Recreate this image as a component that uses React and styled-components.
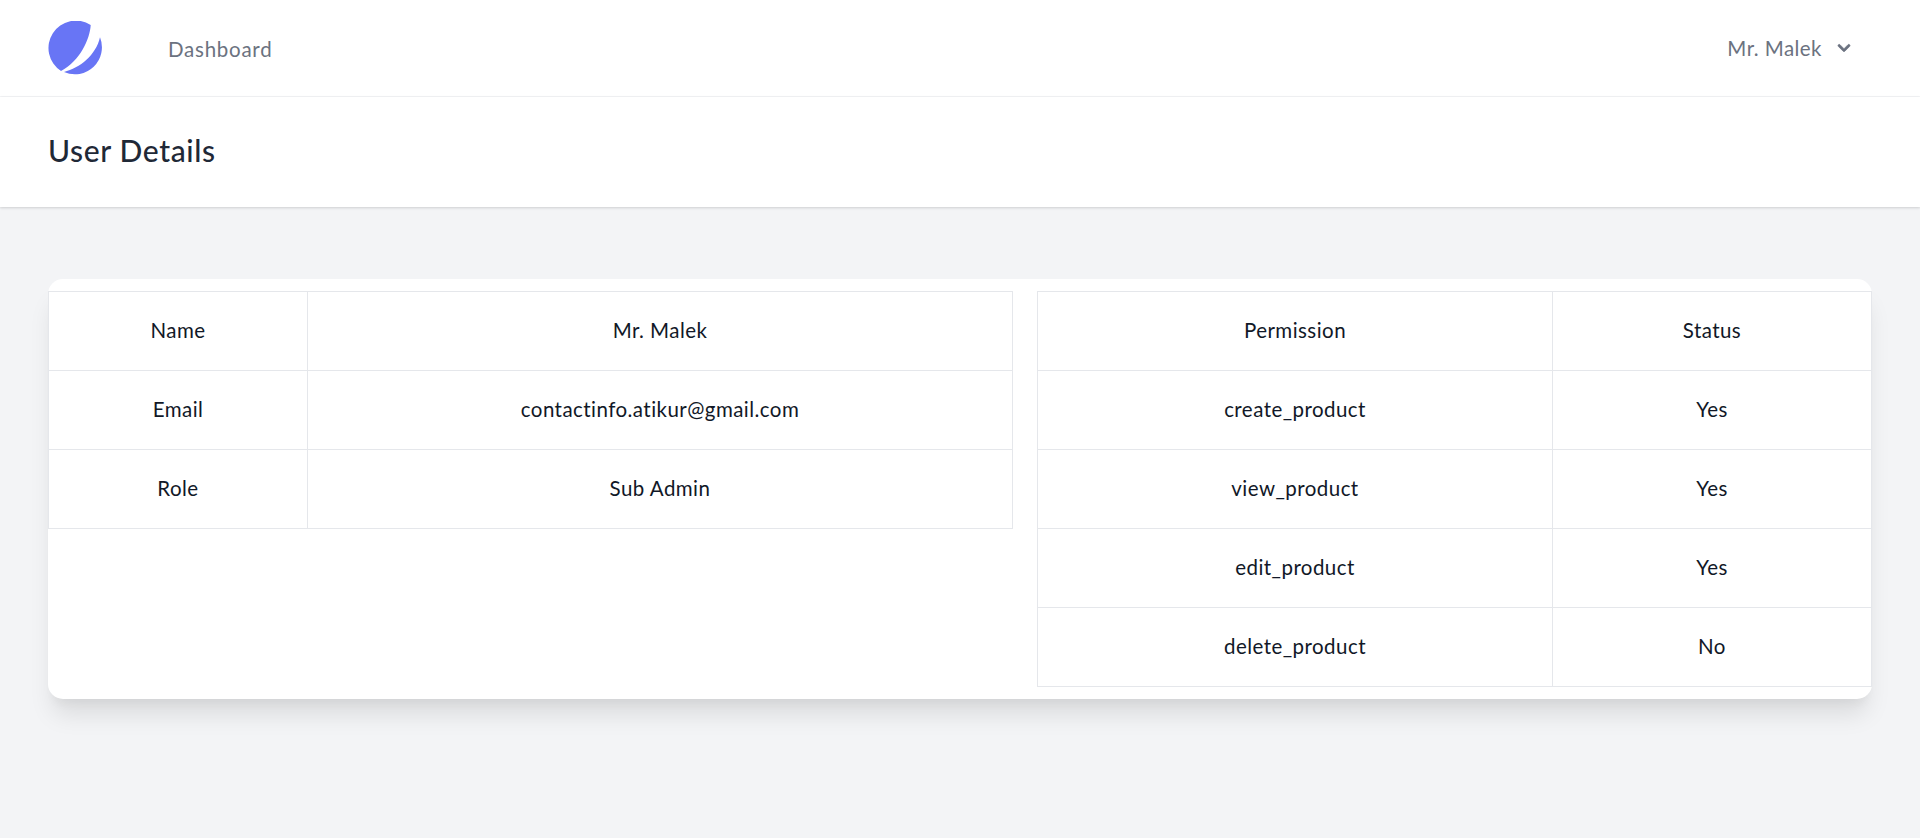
import React from 'react';
import styled, { createGlobalStyle } from 'styled-components';
import { HiChevronDown } from 'react-icons/hi';

const GlobalStyle = createGlobalStyle`
  html, body {
    margin: 0;
    padding: 0;
    background: #f3f4f6;
  }
  body {
    font-family: 'Lato', 'Noto Sans', sans-serif;
    letter-spacing: 0.45px;
  }
`;

const Page = styled.div`
  min-height: 838px;
  background: #f3f4f6;
`;

const Nav = styled.nav`
  height: 96px;
  box-sizing: content-box;
  background: #ffffff;
  border-bottom: 1px solid #f3f4f6;
  display: flex;
  align-items: center;
  justify-content: space-between;
  padding: 0 48px;
`;

const NavLeft = styled.div`
  display: flex;
  align-items: center;
  gap: 66px;
`;

const Logo = styled.svg`
  width: 54px;
  height: 54px;
  display: block;
`;

const NavLink = styled.a`
  margin-top: 2px;
  font-size: 20.5px;
  letter-spacing: 0.75px;
  color: #6b7280;
  text-decoration: none;
`;

const UserMenu = styled.button`
  display: flex;
  align-items: center;
  gap: 10px;
  margin: 0 16px 0 0;
  padding: 0;
  border: none;
  background: none;
  font: inherit;
  letter-spacing: inherit;
  font-size: 20.5px;
  color: #6b7280;
`;

const Chevron = styled(HiChevronDown)`
  stroke: currentColor;
  stroke-width: 0.5;
`;

const Header = styled.header`
  background: #ffffff;
  height: 110px;
  padding: 0 48px 4px;
  box-sizing: border-box;
  display: flex;
  align-items: center;
  box-shadow: 0 1px 3px rgba(0, 0, 0, 0.1), 0 1px 2px rgba(0, 0, 0, 0.06);
`;

const Title = styled.h2`
  margin: 0;
  font-size: 30px;
  font-weight: 500;
  letter-spacing: 0.65px;
  color: #1f2937;
`;

const Main = styled.main`
  padding: 72px 48px 0;
`;

const Card = styled.div`
  background: #ffffff;
  border-radius: 15px;
  padding: 12px 0;
  display: flex;
  align-items: flex-start;
  gap: 24px;
  box-shadow: 0 20px 25px -5px rgba(0, 0, 0, 0.1), 0 10px 10px -5px rgba(0, 0, 0, 0.04);
`;

const Table = styled.table`
  border-collapse: collapse;
  table-layout: fixed;
  width: ${(p) => p.$width}px;
  flex: none;
  font-size: 20.5px;
  color: #111827;
`;

const Cell = styled.td`
  height: 79px;
  padding: 0 0 2px;
  box-sizing: border-box;
  border: 1px solid #e5e7eb;
  text-align: center;
`;

const profile = [
  ['Name', 'Mr. Malek'],
  ['Email', 'contactinfo.atikur@gmail.com'],
  ['Role', 'Sub Admin'],
];

const permissions = [
  ['Permission', 'Status'],
  ['create_product', 'Yes'],
  ['view_product', 'Yes'],
  ['edit_product', 'Yes'],
  ['delete_product', 'No'],
];

function DataTable({ rows, width, firstCol }) {
  return (
    <Table $width={width}>
      <colgroup>
        <col style={{ width: firstCol }} />
        <col />
      </colgroup>
      <tbody>
        {rows.map((row) => (
          <tr key={row[0]}>
            <Cell>{row[0]}</Cell>
            <Cell>{row[1]}</Cell>
          </tr>
        ))}
      </tbody>
    </Table>
  );
}

export default function App() {
  return (
    <Page>
      <GlobalStyle />
      <Nav>
        <NavLeft>
          <Logo viewBox="0 0 54 54">
            <path d="M42.7 4 A27 27 0 1 0 13 50 C32 40 42 18 42.7 4 Z" fill="#6875f5" />
            <path d="M52 16.3 A27 27 0 0 1 16 51 C32 47 48 34 52 16.3 Z" fill="#6875f5" />
          </Logo>
          <NavLink href="#">Dashboard</NavLink>
        </NavLeft>
        <UserMenu>
          Mr. Malek
          <Chevron size={24} />
        </UserMenu>
      </Nav>
      <Header>
        <Title>User Details</Title>
      </Header>
      <Main>
        <Card>
          <DataTable rows={profile} width={965} firstCol={259} />
          <DataTable rows={permissions} width={835} firstCol={515} />
        </Card>
      </Main>
    </Page>
  );
}
